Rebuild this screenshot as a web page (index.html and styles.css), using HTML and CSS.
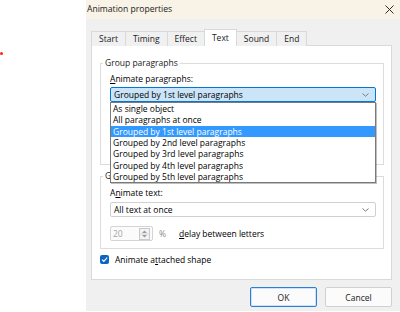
FILE: index.html
```html
<!DOCTYPE html>
<html>
<head>
<meta charset="utf-8">
<title>Animation properties</title>
<link rel="stylesheet" href="styles.css">
</head>
<body>
<div class="screen">
  <span class="marker"></span>
  <div class="dialog">
    <div class="titlebar">
      <span class="title">Animation properties</span>
      <svg class="close" width="9" height="9" viewBox="0 0 9 9"><path d="M0.5 0.5L8.5 8.5M8.5 0.5L0.5 8.5" stroke="#2b2b2b" stroke-width="1" fill="none"/></svg>
    </div>
    <div class="content">
      <div class="tabs">
        <div class="tab">Start</div>
        <div class="tab">Timing</div>
        <div class="tab">Effect</div>
        <div class="tab active">Text</div>
        <div class="tab">Sound</div>
        <div class="tab">End</div>
      </div>
      <div class="panel">
        <fieldset class="group g1">
          <legend>Group paragraphs</legend>
          <div class="label"><u>A</u>nimate paragraphs:</div>
          <div class="combo-wrap">
            <div class="combo focused">
              <span class="combo-text">Grouped by 1st level paragraphs</span>
              <svg class="chev" width="7" height="4" viewBox="0 0 7 4"><path d="M0.5 0.5L3.5 3.2L6.5 0.5" stroke="#7a7a7a" stroke-width="1" fill="none"/></svg>
            </div>
            <ul class="droplist">
              <li>As single object</li>
              <li>All paragraphs at once</li>
              <li class="selected">Grouped by 1st level paragraphs</li>
              <li>Grouped by 2nd level paragraphs</li>
              <li>Grouped by 3rd level paragraphs</li>
              <li>Grouped by 4th level paragraphs</li>
              <li>Grouped by 5th level paragraphs</li>
            </ul>
          </div>
        </fieldset>
        <fieldset class="group g2">
          <legend>Group text</legend>
          <div class="label">A<u>n</u>imate text:</div>
          <div class="combo">
            <span class="combo-text">All text at once</span>
            <svg class="chev" width="7" height="4" viewBox="0 0 7 4"><path d="M0.5 0.5L3.5 3.2L6.5 0.5" stroke="#7a7a7a" stroke-width="1" fill="none"/></svg>
          </div>
          <div class="spin-row">
            <div class="spin">
              <span class="spin-value">20</span>
              <svg class="spin-btn" width="11" height="12" viewBox="0 0 11 12"><rect x="0.5" y="0.5" width="10" height="11" fill="#f3f3f3" stroke="#c9c9c9"/><path d="M3 5L5.5 2.5L8 5Z" fill="#9b9b9b"/><path d="M3 7L5.5 9.5L8 7Z" fill="#9b9b9b"/><path d="M1 6H10" stroke="#d6d6d6"/></svg>
            </div>
            <span class="percent">%</span>
            <span class="delay"><u>d</u>elay between letters</span>
          </div>
        </fieldset>
        <div class="check-row">
          <span class="checkbox"><svg width="9" height="9" viewBox="0 0 9 9"><path d="M2 4.6L3.8 6.3L7.2 2.6" stroke="#fff" stroke-width="1.2" fill="none"/></svg></span>
          <span>Animate a<u>t</u>tached shape</span>
        </div>
      </div>
      <div class="buttons">
        <button class="btn default">OK</button>
        <button class="btn">Cancel</button>
      </div>
    </div>
  </div>
</div>
</body>
</html>
```
FILE: styles.css
```css
html, body {
  margin: 0;
  padding: 0;
  background: #fff;
}
body {
  width: 400px;
  height: 312px;
  overflow: hidden;
  font-family: "Open Sans", "Noto Sans", sans-serif;
  font-size: 8.5px;
  line-height: 11px;
  color: #000;
}
.screen {
  position: relative;
  width: 400px;
  height: 312px;
}
.marker {
  position: absolute;
  left: 0;
  top: 52px;
  width: 3px;
  height: 3px;
  border-radius: 50%;
  background: #f22;
}
.dialog {
  margin-left: 86px;
  width: 314px;
  height: 311px;
  background: #f0f0f0;
  display: flex;
  flex-direction: column;
}
.titlebar {
  height: 19px;
  flex: none;
  background: #f8f3e6;
  display: flex;
  align-items: center;
  padding: 0 6px 0 1px;
}
.title {
  color: #1a1a1a;
  font-size: 8.6px;
}
.close {
  margin-left: auto;
}
.content {
  padding: 11px 8px 0 5px;
  display: flex;
  flex-direction: column;
}
.tabs {
  display: flex;
  align-items: flex-end;
  height: 16px;
  margin-bottom: -1px;
  position: relative;
  z-index: 1;
}
.tab {
  height: 15px;
  box-sizing: border-box;
  padding: 0 7px;
  border: 1px solid #d9d9d9;
  border-bottom: none;
  margin-right: -1px;
  background: #f0f0f0;
  line-height: 14px;
  color: #1a1a1a;
}
.tab.active {
  height: 17px;
  background: #fff;
  position: relative;
  z-index: 2;
  line-height: 16px;
}
.panel {
  height: 235px;
  box-sizing: border-box;
  background: #fff;
  border: 1px solid #d9d9d9;
  padding: 11px 7px 0 8px;
}
.group {
  margin: 0;
  border: 1px solid #dcdcdc;
  padding: 4px 7px 0 9px;
  min-width: 0;
}
.group legend {
  padding: 0 2px;
  margin-left: -7px;
  line-height: 12px;
  color: #1a1a1a;
}
.g1 {
  padding-bottom: 62px;
}
.g2 {
  margin-top: 5px;
  padding-top: 5px;
  padding-bottom: 7px;
}
.label {
  line-height: 11px;
}
.combo-wrap {
  position: relative;
  margin-top: 3px;
}
.combo {
  height: 15px;
  box-sizing: border-box;
  border: 1px solid #d0d0d0;
  border-radius: 2px;
  background: #fff;
  display: flex;
  align-items: center;
  padding: 0 6px 0 3px;
}
.g2 .combo {
  margin-top: 4px;
}
.combo.focused {
  background: #cce4f7;
  border-color: #0078d7;
}
.combo-text {
  flex: 1;
  white-space: nowrap;
}
.chev {
  flex: none;
}
.droplist {
  position: absolute;
  top: 100%;
  left: 0;
  right: 0;
  margin: 0;
  padding: 0;
  list-style: none;
  background: #fff;
  border: 1px solid #7a7a7a;
  box-shadow: 1px 1px 0 rgba(0, 0, 0, 0.25);
  z-index: 5;
}
.droplist li {
  height: 11.33px;
  line-height: 11.33px;
  padding-left: 2px;
  white-space: nowrap;
}
.droplist li.selected {
  background: #3399ff;
  color: #fff;
}
.spin-row {
  margin-top: 9px;
  display: flex;
  align-items: center;
  height: 15px;
}
.spin {
  width: 43px;
  height: 15px;
  box-sizing: border-box;
  border: 1px solid #d4d4d4;
  border-radius: 2px;
  background: #fbfbfb;
  display: flex;
  align-items: center;
  padding: 0 2px 0 2px;
}
.spin-value {
  flex: 1;
  color: #a3a3a3;
}
.percent {
  margin-left: 6px;
  color: #8a8a8a;
}
.delay {
  margin-left: 13px;
}
.check-row {
  margin-top: 5px;
  display: flex;
  align-items: center;
  height: 11px;
}
.checkbox {
  width: 9px;
  height: 9px;
  border-radius: 2px;
  background: #0a64c4;
  display: flex;
  margin-right: 6px;
}
.buttons {
  margin-top: 7px;
  display: flex;
  justify-content: flex-end;
  gap: 8px;
}
.btn {
  width: 67px;
  height: 20px;
  box-sizing: border-box;
  border: 1px solid #d0d0d0;
  border-radius: 2px;
  background: #fbfbfb;
  font-family: inherit;
  font-size: 8.5px;
  color: #1a1a1a;
  padding: 0;
}
.btn.default {
  border-color: #2b7fd6;
  box-shadow: inset 0 0 0 1px #cfe3f8;
}
```
